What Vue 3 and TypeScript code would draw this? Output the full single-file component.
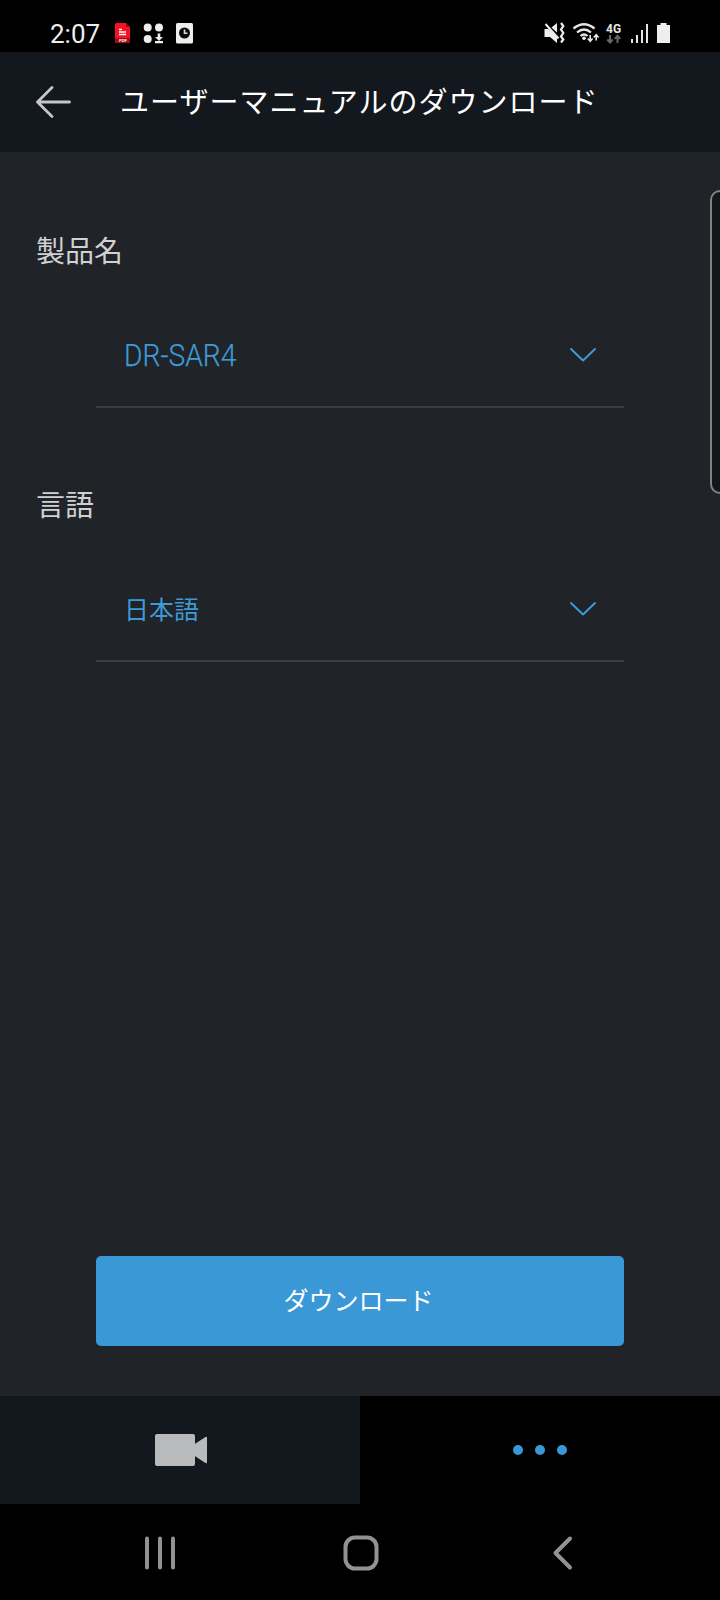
<script setup lang="ts">
interface Field {
  label: string
  value: string
  kind: 'latin' | 'kanji'
}

const fields: Field[] = [
  { label: '製品名', value: 'DR-SAR4', kind: 'latin' },
  { label: '言語', value: '日本語', kind: 'kanji' },
]
</script>

<template>
  <div class="screen">
    <div class="status">
      <span class="clock">2:07</span>
      <svg class="ico-left" width="80" height="24" viewBox="114 22 80 24">
        <path d="M116.500 23h9.500l4 4v16h-15v-18.500q0-1.500 1.500-1.500z" fill="#f51222" />
        <path d="M115 38h15v5h-15z" fill="#a80b18" />
        <path d="M126 23l4 4h-4z" fill="#8d0a14" />
        <path d="M119 29.500h3M119 32h7M119 34.500h7" stroke="#fff" stroke-width="1.300" />
        <text x="119" y="42.300" class="pdf">PDF</text>
        <g fill="#eee">
          <circle cx="147.700" cy="27.500" r="4" />
          <circle cx="159" cy="27.500" r="4" />
          <circle cx="147.700" cy="39" r="4" />
          <path d="M157.700 33.500h2.600v3.500h2.700l-4 4-4-4h2.700zM155 41h8v2.200h-8z" />
          <rect x="176" y="23" width="17" height="20.500" rx="1.500" />
        </g>
        <circle cx="184.500" cy="33" r="5.500" fill="#090909" />
        <path d="M184.500 29.500v3.700h3" fill="none" stroke="#ddd" stroke-width="1.600" />
      </svg>
      <svg class="ico-right" width="128" height="24" viewBox="543 22 128 24">
        <g fill="#eee">
          <path d="M544.500 29h4l8.500 8v6l-7-6h-5.500zM551.500 27.500l5.500-4.500v9.500z" />
          <path d="M545.500 24l13 14.500" stroke="#eee" stroke-width="2" />
          <path d="M561 23l2.300 3-2.300 3.500 2.300 3.500-2.300 3.500 2.300 3-2.300 3" fill="none" stroke="#eee" stroke-width="2.200" />
        </g>
        <g fill="none" stroke="#e6e6e6" stroke-width="2.300">
          <path d="M573.500 28.500q10.500-8.500 21 0" />
          <path d="M577 32.500q7-6 14 0" />
          <path d="M580.500 36q3.500-3 7 0" />
          <path d="M590.200 35v6M587.800 38.500l2.400 2.700 2.400-2.700M596.200 40.500v-5.500M593.800 37.500l2.400-2.700 2.400 2.700" stroke-width="1.600" />
        </g>
        <circle cx="584" cy="38.300" r="1.800" fill="#eee" />
        <text x="606" y="32.500" class="net">4G</text>
        <path d="M610 35v7M607.300 39.500l2.700 3 2.700-3M617.500 43v-7M614.800 38.800l2.700-3 2.700 3" fill="none" stroke="#666" stroke-width="2" />
        <path d="M632 39v4M637 35v8M642 30v13M647 24v19" stroke="#e4e4e4" stroke-width="2" />
        <path d="M660.500 23h6v2h3.500v18h-13v-18h3.500z" fill="#eee" />
      </svg>
    </div>

    <header class="header">
      <svg class="back" width="36" height="32" viewBox="0 0 36 32" fill="none" stroke="#c5c6c8" stroke-width="2.800" stroke-linecap="round" stroke-linejoin="round">
        <path d="M17 1.500L2.500 16 17 30.500M2.500 16h32" />
      </svg>
      <h1 class="title">ユーザーマニュアルのダウンロード</h1>
    </header>

    <main class="main">
      <section v-for="field in fields" :key="field.label" class="field">
        <div class="label">{{ field.label }}</div>
        <div class="select">
          <span class="value" :class="field.kind">{{ field.value }}</span>
          <svg width="28" height="16" viewBox="0 0 28 16" fill="none" stroke="#3d9ad6" stroke-width="2" stroke-linecap="round" stroke-linejoin="round">
            <path d="M2 2l12 11.500L26 2" />
          </svg>
        </div>
      </section>
      <button class="download" type="button">ダウンロード</button>
      <div class="edge-panel"></div>
    </main>

    <nav class="tabs">
      <div class="tab camera">
        <svg width="52" height="32" viewBox="0 0 52 32" fill="#b9babc">
          <rect width="40" height="32" rx="2" />
          <path d="M39 10.500L50.500 3q1.500-.7 1.500 1v24q0 1.700-1.500 1L39 21.500z" />
        </svg>
      </div>
      <div class="tab more"><i></i><i></i><i></i></div>
    </nav>

    <div class="system">
      <svg width="432" height="38" viewBox="144 1534 432 38" fill="none" stroke="#929292" stroke-width="4" stroke-linecap="round" stroke-linejoin="round">
        <path d="M147 1538.500v29M160 1538.500v29M173 1538.500v29" />
        <rect x="345.500" y="1537.500" width="31" height="31" rx="9.500" />
        <path d="M570 1538.500l-14.500 14.500 14.500 14.500" />
      </svg>
    </div>
  </div>
</template>

<style>
body {
  margin: 0;
  background: #000;
}
</style>

<style scoped>
.screen {
  width: 720px;
  height: 1600px;
  display: flex;
  flex-direction: column;
  overflow: hidden;
  background: #000;
  font-family: "Noto Sans CJK JP", sans-serif;
}

.status {
  height: 52px;
  flex: none;
  box-sizing: border-box;
  padding: 22px 49px 0 50px;
  display: flex;
  align-items: flex-start;
}

.clock {
  width: 64px;
  font: 26px/24px Roboto, sans-serif;
  color: #eee;
}

.ico-right {
  margin-left: auto;
}

.pdf {
  font: bold 4px "Liberation Sans", sans-serif;
  fill: #fff;
}

.net {
  font: bold 12px Roboto, sans-serif;
  fill: #e4e4e4;
}

.header {
  height: 100px;
  flex: none;
  box-sizing: border-box;
  padding: 0 0 0 35px;
  display: flex;
  align-items: center;
  background: #13171e;
}

.back {
  margin-bottom: 1px;
}

.title {
  margin: 0 0 4px 49px;
  font-size: 29px;
  font-weight: 400;
  line-height: 44px;
  letter-spacing: 1px;
  white-space: nowrap;
  color: #fff;
}

.main {
  position: relative;
  height: 1244px;
  flex: none;
  box-sizing: border-box;
  padding-top: 73px;
  background: #202327;
}

.field {
  height: 254px;
}

.label {
  height: 48px;
  padding-left: 36px;
  font-size: 29px;
  line-height: 48px;
  color: #d0d1d2;
}

.select {
  height: 135px;
  margin: 0 96px;
  padding: 31px 27px 0 28px;
  box-sizing: border-box;
  border-bottom: 2px solid #3b3d41;
  display: flex;
  align-items: center;
  justify-content: space-between;
  color: #3d9ad6;
}

.latin {
  padding-top: 2px;
  font: 300 31px/40px Roboto, sans-serif;
  -webkit-text-stroke: 0.250px #3d9ad6;
  transform: scaleX(0.910);
  transform-origin: left;
}

.kanji {
  padding-bottom: 2px;
  font-size: 25px;
  line-height: 40px;
}

.download {
  display: block;
  width: 528px;
  height: 90px;
  margin: 523px 96px 0;
  padding: 0 3px 4px 0;
  border: 0;
  border-radius: 5px;
  background: #3998d5;
  color: #fff;
  font-family: inherit;
  font-size: 25px;
}

.edge-panel {
  position: absolute;
  top: 38px;
  right: -12px;
  width: 22px;
  height: 304px;
  box-sizing: border-box;
  border: 2px solid #808386;
  border-radius: 10px;
  background: #14171a;
}

.tabs {
  height: 108px;
  flex: none;
  display: flex;
}

.tab {
  width: 360px;
  box-sizing: border-box;
  display: flex;
  align-items: center;
  justify-content: center;
}

.camera {
  padding-left: 2px;
  background: #13171e;
}

.more {
  gap: 12px;
}

.more i {
  width: 10px;
  height: 10px;
  border-radius: 50%;
  background: #3998d5;
}

.system {
  flex: 1;
  padding: 30px 0 0 144px;
}
</style>
